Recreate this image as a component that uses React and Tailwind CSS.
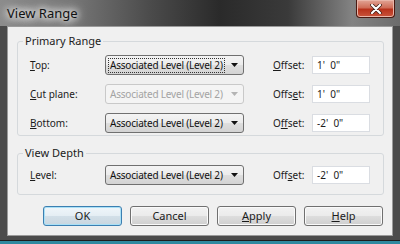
import React from "react";

function Arrow({ disabled }) {
  return (
    <svg width="7" height="4" viewBox="0 0 7 4" className="shrink-0">
      <path d="M0 0 H7 L3.5 4 Z" fill={disabled ? "#b4b4b4" : "#111"} />
    </svg>
  );
}

function Dropdown({ disabled, focused }) {
  return (
    <div
      className={
        "w-[139px] h-[20px] rounded-[3px] border flex items-center pl-[2px] pr-[5px] gap-[6px] " +
        (disabled
          ? "border-[#c9c9c9] bg-[#f4f4f4] text-[#a3a3a3]"
          : "border-[#707070] bg-[linear-gradient(180deg,#f4f4f4_0%,#ececec_48%,#dedede_52%,#d3d3d3_100%)] text-[#111]")
      }
    >
      <span
        className={
          "h-[15px] flex-1 flex items-center pl-[1px] whitespace-nowrap overflow-hidden tracking-[-0.2px] " +
          (focused ? "border border-dotted border-[#333]" : "border border-transparent")
        }
      >
        Associated Level (Level 2)
      </span>
      <Arrow disabled={disabled} />
    </div>
  );
}

function Row({ label, offsetLabel, value, disabled, focused }) {
  return (
    <div className="flex items-center h-[20px]">
      <div className="w-[75px] whitespace-nowrap">{label}</div>
      <Dropdown disabled={disabled} focused={focused} />
      <div className="w-[39px] ml-[29px] whitespace-nowrap">{offsetLabel}</div>
      <div className="w-[58px] h-[18px] bg-white border border-[#dadde2] flex items-center pl-[4px] whitespace-pre">
        {value}
      </div>
    </div>
  );
}

function Btn({ children, primary }) {
  return (
    <div
      className={
        "w-[79px] h-[20px] rounded-[3px] border flex items-center justify-center " +
        (primary
          ? "border-[#3c7fb1] shadow-[inset_0_0_0_1px_#a9e0f6] bg-[linear-gradient(180deg,#f0f6fa_0%,#e5eef4_48%,#d2dfe8_52%,#c9d6df_100%)]"
          : "border-[#707070] shadow-[inset_0_0_0_1px_#fafafa] bg-[linear-gradient(180deg,#f2f2f2_0%,#ebebeb_48%,#dddddd_52%,#cfcfcf_100%)]")
      }
    >
      {children}
    </div>
  );
}

export default function App() {
  return (
    <div className="w-[400px] h-[244px] bg-[#4b4b4b] flex flex-col overflow-hidden font-['Noto_Sans',sans-serif] text-[10px] leading-[14px] text-[#1b1b1b]">
      <div className="h-[26px] shrink-0 flex items-start justify-between bg-[linear-gradient(90deg,#8c8c8c_0%,#777_18%,#4a4a4a_38%,#2a2a2a_55%,#3a3a3a_72%,#838383_88%,#6c6c6c_100%)]">
        <span className="ml-[7px] mt-[5px] text-[13px] leading-[16px] text-[#111] [text-shadow:0_0_6px_#fff,0_0_10px_#fff,0_0_12px_#eee]">
          View Range
        </span>
        <div className="mr-[5px] w-[39px] h-[18px] rounded-b-[4px] border border-t-0 border-[#4a1a12] bg-[linear-gradient(180deg,#e2a596_0%,#cf6d58_45%,#b8321c_55%,#c9553c_100%)] shadow-[inset_0_0_0_1px_#e9b5a8] flex items-center justify-center">
          <svg width="12" height="10" viewBox="0 0 12 10">
            <path d="M2 1 L10 9 M10 1 L2 9" stroke="#3a1a12" strokeWidth="3.6" strokeLinecap="round" />
            <path d="M2 1 L10 9 M10 1 L2 9" stroke="#fff" strokeWidth="2.2" strokeLinecap="round" />
          </svg>
        </div>
      </div>
      <div className="ml-[7px] mr-[7px] h-[210px] shrink-0 bg-[#f0f0f0] border border-[#9a9a9a] flex flex-col">
        <fieldset className="ml-[9px] mr-[8px] mt-[7px] border border-[#d5d9dc] rounded-[3px] px-0 pb-[2px]">
          <legend className="ml-[5px] px-[2px] text-[11px] leading-[14px]">Primary Range</legend>
          <div className="flex flex-col gap-[9px] pl-[12px] pt-[7px]">
            <Row
              focused
              label={<><u>T</u>op:</>}
              offsetLabel={<><u>O</u>ffset:</>}
              value={"1'  0\""}
            />
            <Row
              disabled
              label={<><u>C</u>ut plane:</>}
              offsetLabel={<>Offs<u>e</u>t:</>}
              value={"1'  0\""}
            />
            <Row
              label={<><u>B</u>ottom:</>}
              offsetLabel={<>O<u>f</u>fset:</>}
              value={"-2'  0\""}
            />
          </div>
        </fieldset>
        <fieldset className="ml-[9px] mr-[8px] mt-[10px] border border-[#d5d9dc] rounded-[3px] px-0 pb-[9px]">
          <legend className="ml-[5px] px-[2px] text-[11px] leading-[14px]">View Depth</legend>
          <div className="flex flex-col pl-[12px] pt-[5px]">
            <Row
              label={<><u>L</u>evel:</>}
              offsetLabel={<>Off<u>s</u>et:</>}
              value={"-2'  0\""}
            />
          </div>
        </fieldset>
        <div className="flex gap-[8px] ml-[35px] mt-[11px] text-[11px]">
          <Btn primary>OK</Btn>
          <Btn>Cancel</Btn>
          <Btn><span><u>A</u>pply</span></Btn>
          <Btn><span><u>H</u>elp</span></Btn>
        </div>
      </div>
      <div className="h-[5px] shrink-0 bg-[#4b4b4b] border-b border-[#1e1e1e]" />
      <div className="flex-1 bg-[#2f8aa0]" />
    </div>
  );
}
